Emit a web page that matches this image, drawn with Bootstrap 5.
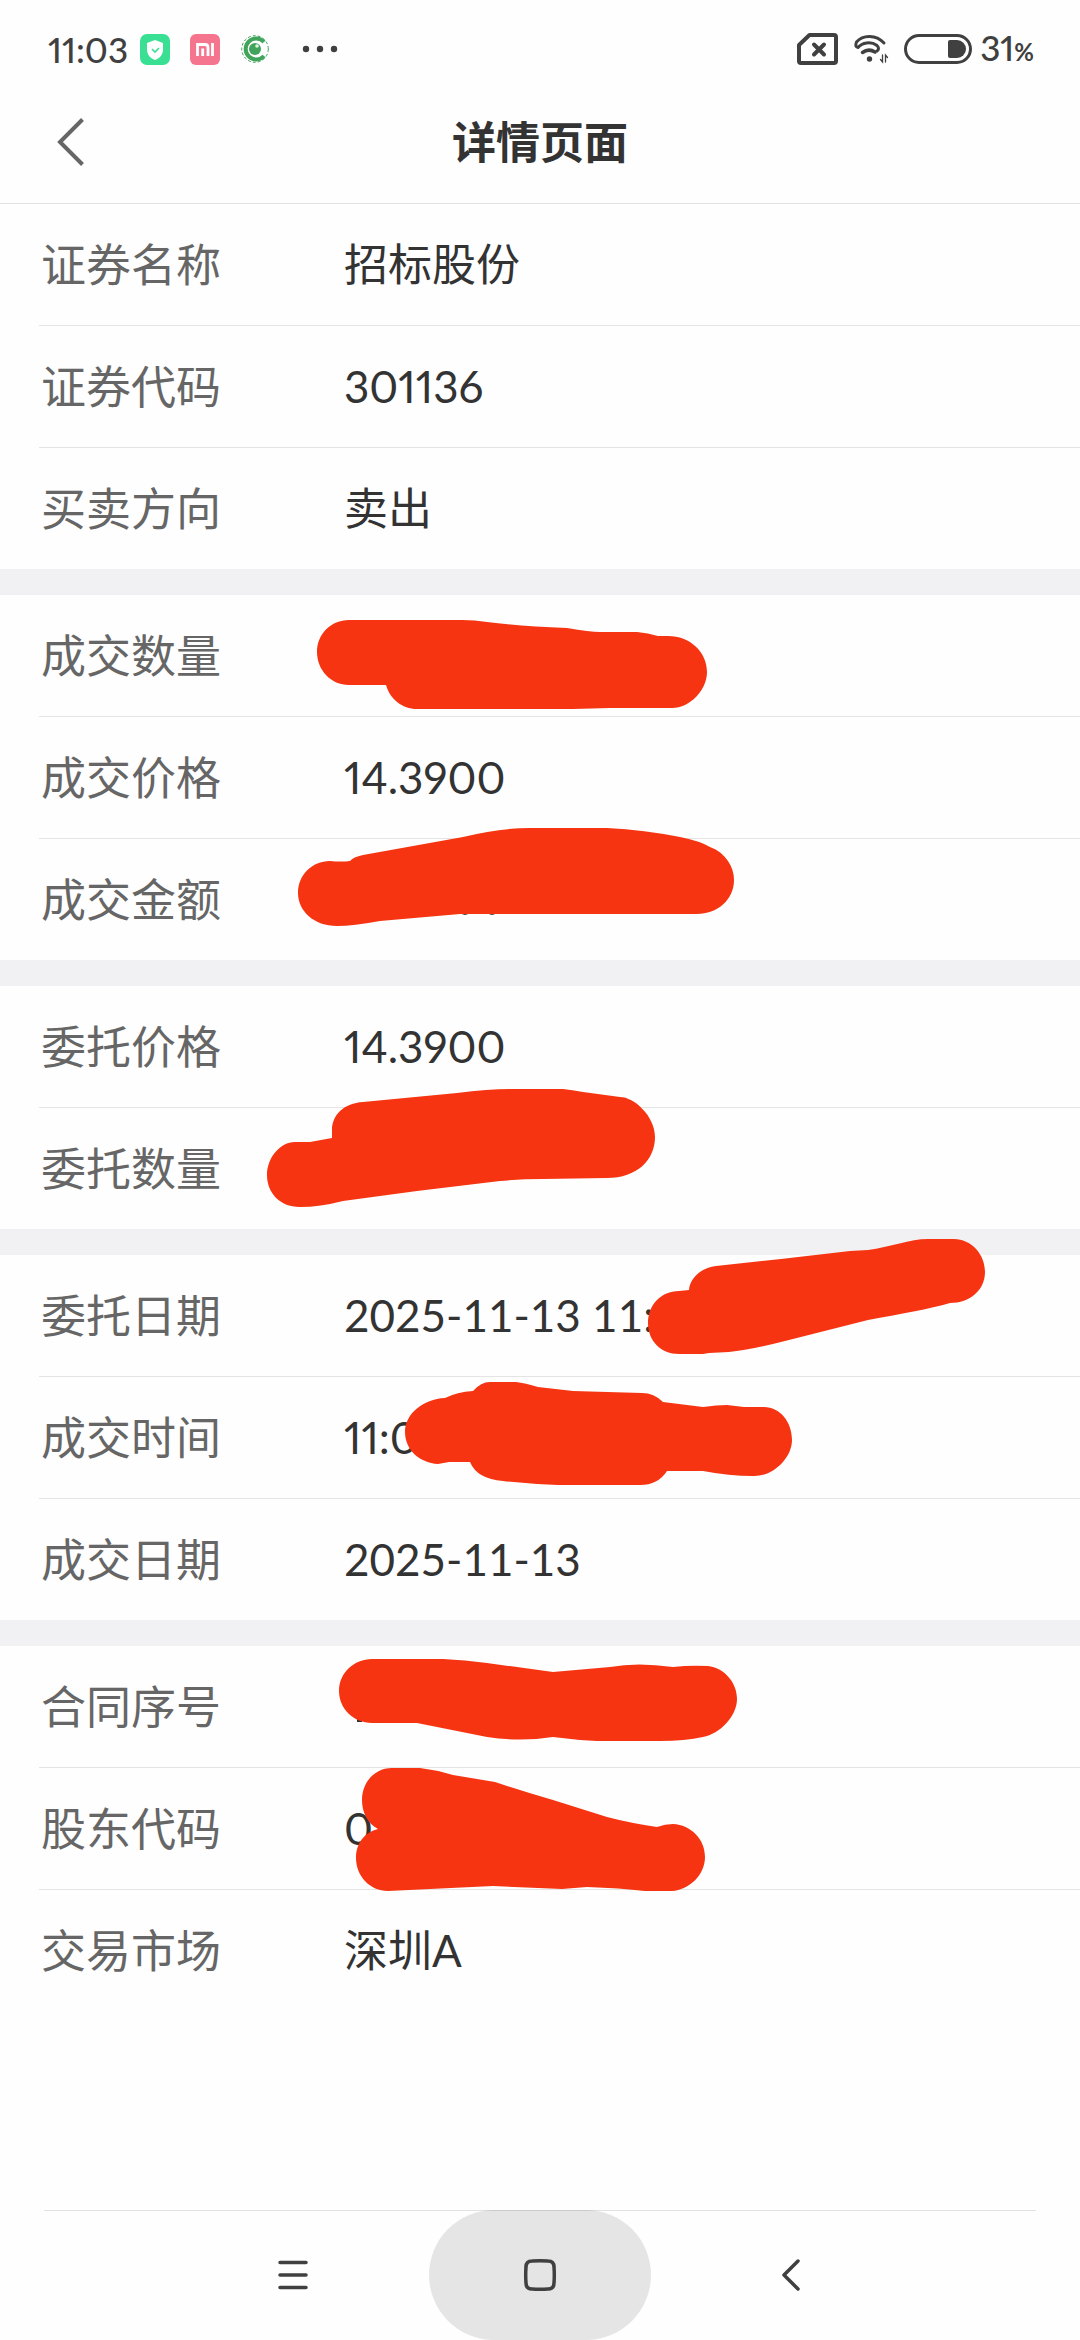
<!DOCTYPE html>
<html lang="zh-CN">
<head>
<meta charset="utf-8">
<meta name="viewport" content="width=device-width, initial-scale=1">
<title>详情页面</title>
<link href="https://cdn.jsdelivr.net/npm/bootstrap@5.3.0/dist/css/bootstrap.min.css" rel="stylesheet">
<style>
  body { font-family: Lato, "Noto Sans CJK SC", sans-serif; font-feature-settings: "pnum"; color: #333; background: #fefefe; }
  svg { display: block; flex: none; overflow: visible; }
  .status { height: 80px; padding: 18px 46px 0 48px; color: #404040; font-size: 35px; line-height: 62px; font-weight: 500; }
  .status-apps { gap: 20px; margin-left: 12px; }
  .status-signal { gap: 16px; }
  .battery { gap: 8px; }
  .percent-sign { font-size: 24px; font-weight: 700; }
  .title-bar { height: 124px; border-bottom: 1px solid #e2e2e4; }
  .title-bar h1 { font-size: 44px; line-height: 64px; font-weight: 700; }
  .back { left: 40px; padding: 16px 17px; }
  .group + .group { border-top: 26px solid #f1f1f4; }
  .detail { margin-left: 39px; padding-left: 2px; border-bottom: 1px solid #e4e4e4; }
  .detail:last-child { border-bottom: 0; }
  .detail dt, .detail dd { padding: 28px 0 29px; line-height: 64px; font-weight: 400; }
  .detail dt { width: 303px; padding: 29px 0 28px; font-size: 45px; color: #666; }
  .detail dd { font-size: 44px; }
  .detail .date-value { font-feature-settings: "tnum"; }
  .scribble { z-index: 1; fill: #f63411; pointer-events: none; }
  .speck { fill: #333; }
  .system-nav { height: 130px; gap: 26px; }
  .system-nav::before { content: ""; position: absolute; top: 0; left: 44px; right: 44px; height: 1px; background: rgba(0, 0, 0, .11); }
  .nav-key { width: 222px; border: 0; border-radius: 65px; background: transparent; }
  .nav-key.pressed { background: #e5e5e5; }
</style>
<script src="https://cdn.jsdelivr.net/npm/bootstrap@5.3.0/dist/js/bootstrap.bundle.min.js"></script>
</head>
<body>
<div class="d-flex flex-column min-vh-100">
  <div class="status d-flex align-items-center justify-content-between">
    <div class="d-flex align-items-center">
      <span>11:03</span>
      <div class="status-apps d-flex align-items-center">
        <svg width="30" height="31" viewBox="0 0 30 31"><rect width="30" height="31" rx="7" fill="#39df93"/><path d="M15 6l8 3v6c0 6-3 9-8 11-5-2-8-5-8-11V9z" fill="#fff"/><path d="M12 15l3 3 4-4" fill="none" stroke="#39df93" stroke-width="1.6"/></svg>
        <svg width="30" height="31" viewBox="0 0 30 31"><rect width="30" height="31" rx="6" fill="#f5758f"/><path d="M7.500 22V10.500h7.500q3 0 3 3V22M12.700 14.500V22M22.500 9V22" fill="none" stroke="#fff" stroke-width="2.800"/></svg>
        <svg width="28" height="30" viewBox="0 0 28 30"><circle cx="15" cy="15" r="13.300" fill="none" stroke="#40a45a" stroke-width="1" stroke-dasharray="3 2"/><path d="M24 8A10.500 10.500 0 1 0 24 22" fill="none" stroke="#40a45a" stroke-width="4"/><circle cx="15" cy="15" r="6" fill="#40a45a"/><circle cx="17" cy="12" r="1.800" fill="#dff3e3"/></svg>
        <svg width="64" height="30" viewBox="0 0 64 30" fill="#404040"><circle cx="18" cy="15" r="3.200"/><circle cx="32" cy="15" r="3.200"/><circle cx="46" cy="15" r="3.200"/></svg>
      </div>
    </div>
    <div class="status-signal d-flex align-items-center">
      <svg width="41" height="32" viewBox="0 0 41 32" fill="none" stroke="#404040" stroke-width="4"><path d="M12.500 2H37q2 0 2 2V28q0 2-2 2H4q-2 0-2-2V12z" stroke-linejoin="round"/><path d="M17 11.500l10 10M27 11.500l-10 10" stroke-linecap="round"/></svg>
      <svg width="34" height="30" viewBox="0 0 34 30" fill="none" stroke="#404040" stroke-width="3" stroke-linecap="round"><path d="M30 9C22 .5 9 .5 2.500 8q-2 5 1.500 5.500C8 8.500 17 7 23 11.500q3 3 0 5.500"/><path d="M8.500 18.500q6-4.500 12.500-.5" stroke-width="3.500"/><circle cx="15.500" cy="25" r="2.700" fill="#404040" stroke="none"/><path d="M28.500 21v7l-2-2.500M31.500 28v-7l2 2.500" stroke-width="1.300"/></svg>
      <div class="battery d-flex align-items-center">
        <svg width="68" height="30" viewBox="0 0 68 30"><rect x="1.500" y="1.500" width="65" height="27" rx="13.500" fill="none" stroke="#404040" stroke-width="3"/><path d="M46 6h7a9 9 0 0 1 0 18h-7q-2 0-2-2V8q0-2 2-2z" fill="#404040"/></svg>
        <span>31<span class="percent-sign">%</span></span>
      </div>
    </div>
  </div>

  <header class="title-bar position-relative d-flex align-items-center justify-content-center">
    <button type="button" class="btn back position-absolute border-0" aria-label="返回"><svg width="28" height="48" viewBox="0 0 28 48" fill="none" stroke="#666" stroke-width="4"><path d="M25.500 1.500L3 24l22.500 22.500"/></svg></button>
    <h1 class="m-0">详情页面</h1>
  </header>

  <main>
    <dl class="group m-0">
      <div class="detail d-flex"><dt>证券名称</dt><dd class="m-0">招标股份</dd></div>
      <div class="detail d-flex"><dt>证券代码</dt><dd class="m-0">301136</dd></div>
      <div class="detail d-flex"><dt>买卖方向</dt><dd class="m-0">卖出</dd></div>
    </dl>
    <dl class="group m-0">
      <div class="detail d-flex position-relative"><dt>成交数量</dt><dd class="m-0"></dd>
        <svg class="scribble position-absolute top-0 start-0" width="1041" height="121" viewBox="39 595 1041 121"><path d="M349 620H462Q475 620 487 622Q520 626 567 628Q590 632 600 632H637Q648 633 658 636H668C690 636 707 652 707 672C707 690 690 708 672 708H610L573 709H417C402 709 390 699 386 685H349C331 685 317 670 317 652S331 620 349 620Z"/></svg></div>
      <div class="detail d-flex"><dt>成交价格</dt><dd class="m-0">14.3900</dd></div>
      <div class="detail d-flex position-relative"><dt>成交金额</dt><dd class="m-0"></dd>
        <svg class="scribble position-absolute top-0 start-0" width="1041" height="121" viewBox="39 839 1041 121"><path class="speck" d="M459 912h12q-6 6-12 0M486 912h12q-6 6-12 0"/><path d="M330 861Q341 862 350 861Q353 857 363 855L463 837Q500 828 530 828H607Q645 830 680 837Q700 841 710 847C726 853 734 867 734 880C734 900 717 914 697 914H460L380 921Q353 926 337 926C314 926 298 911 298 893S312 861 330 861Z"/></svg></div>
    </dl>
    <dl class="group m-0">
      <div class="detail d-flex"><dt>委托价格</dt><dd class="m-0">14.3900</dd></div>
      <div class="detail d-flex position-relative"><dt>委托数量</dt><dd class="m-0"></dd>
        <svg class="scribble position-absolute top-0 start-0" width="1041" height="121" viewBox="39 1108 1041 121"><path d="M295 1142H310L332 1138V1130C332 1115 344 1103 363 1102L457 1093Q488 1089 510 1089H563Q572 1090 583 1092L620 1097C634 1097 655 1116 655 1137C655 1160 637 1178 607 1178L543 1179Q520 1179 500 1181L417 1191L343 1201Q320 1207 300 1207C279 1207 267 1192 267 1175S280 1142 295 1142Z"/></svg></div>
    </dl>
    <dl class="group m-0">
      <div class="detail d-flex position-relative"><dt>委托日期</dt><dd class="date-value m-0">2025-11-13 11:0</dd>
        <svg class="scribble position-absolute top-0 start-0" width="1041" height="121" viewBox="39 1255 1041 121"><path d="M679 1291L689 1290C690 1277 703 1267 716 1266L781 1259L850 1251L868 1250C890 1247 910 1239 928 1239H954C971 1239 985 1254 985 1272S970 1303 950 1303C930 1309 900 1314 868 1320L785 1341Q750 1350 729 1352L709 1353L703 1354H679C661 1354 648 1341 648 1323S661 1291 679 1291Z"/></svg></div>
      <div class="detail d-flex position-relative"><dt>成交时间</dt><dd class="m-0">11:0</dd>
        <svg class="scribble position-absolute top-0 start-0" width="1041" height="121" viewBox="39 1377 1041 121"><path d="M445 1398Q457 1392 473 1391Q481 1382 490 1382H516Q525 1383 538 1387L573 1391L642 1393Q654 1393 663 1402L703 1407Q717 1405 727 1405L744 1407H764C780 1407 792 1422 792 1440S773 1477 753 1476Q729 1476 703 1471H667Q658 1485 640 1485H558Q530 1484 503 1481Q477 1479 470 1462H449L438 1464C420 1463 405 1450 405 1432S423 1399 445 1398Z"/></svg></div>
      <div class="detail d-flex"><dt>成交日期</dt><dd class="date-value m-0">2025-11-13</dd></div>
    </dl>
    <dl class="group m-0">
      <div class="detail d-flex position-relative"><dt>合同序号</dt><dd class="m-0"></dd>
        <svg class="scribble position-absolute top-0 start-0" width="1041" height="121" viewBox="39 1646 1041 121"><path class="speck" d="M357 1718h5v4h-5z"/><path d="M372 1659H443Q465 1660 487 1663L553 1672L610 1667Q637 1662 673 1667Q690 1665 708 1666C724 1668 737 1682 737 1699C737 1716 720 1734 703 1737Q685 1741 660 1741H597Q576 1740 553 1737Q520 1742 487 1737L417 1723H372C354 1723 339 1709 339 1691S354 1659 372 1659Z"/></svg></div>
      <div class="detail d-flex position-relative"><dt>股东代码</dt><dd class="m-0">0</dd>
        <svg class="scribble position-absolute top-0 start-0" width="1041" height="121" viewBox="39 1768 1041 121"><path d="M392 1768H420Q437 1770 453 1775L495 1782Q525 1792 553 1800L607 1817Q630 1823 657 1827Q665 1824 673 1824C691 1825 705 1839 705 1857S689 1890 672 1891H645Q620 1888 587 1887L562 1889L493 1886L388 1891C370 1891 356 1876 356 1858C356 1843 365 1832 378 1829C367 1823 362 1812 362 1800C362 1782 375 1768 392 1768Z"/></svg></div>
      <div class="detail d-flex"><dt>交易市场</dt><dd class="m-0">深圳A</dd></div>
    </dl>
  </main>

  <nav class="system-nav position-relative d-flex justify-content-center mt-auto" aria-label="系统导航">
    <button type="button" class="nav-key d-flex align-items-center justify-content-center" aria-label="最近任务"><svg width="30" height="32" viewBox="0 0 30 32" stroke="#404040" stroke-width="3.500" stroke-linecap="round"><path d="M3 3.500H29M3 16H29M3 28.500H29"/></svg></button>
    <button type="button" class="nav-key pressed d-flex align-items-center justify-content-center" aria-label="主屏幕"><svg width="32" height="32" viewBox="0 0 32 32" fill="none" stroke="#404040" stroke-width="3.500"><path d="M8 2q8-.6 16 0 6 0 6 6 .6 8 0 16 0 6-6 6-8 .6-16 0-6 0-6-6-.6-8 0-16 0-6 6-6z"/></svg></button>
    <button type="button" class="nav-key d-flex align-items-center justify-content-center" aria-label="返回"><svg width="24" height="32" viewBox="0 0 24 32" fill="none" stroke="#404040" stroke-width="3.500" stroke-linecap="round" stroke-linejoin="round"><path d="M22 2L8 16l14 14"/></svg></button>
  </nav>
</div>
</body>
</html>
